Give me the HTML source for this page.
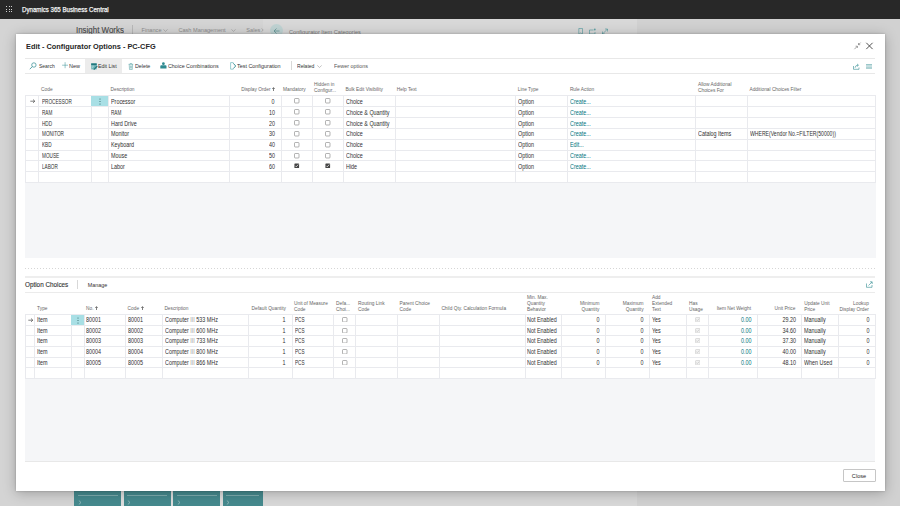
<!DOCTYPE html>
<html><head><meta charset="utf-8"><style>
html,body{margin:0;padding:0;width:900px;height:506px;overflow:hidden;}
body{position:relative;font-family:"Liberation Sans", sans-serif;}
.t{position:absolute;line-height:0;white-space:nowrap;}
.r{position:absolute;}
</style></head><body>
<div class="r" style="left:0.00px;top:0.00px;width:900.00px;height:506.00px;background:#d4d4d4;"></div>
<div class="r" style="left:263.00px;top:19.00px;width:374.00px;height:487.00px;background:#d8d8d8;"></div>
<div class="r" style="left:637.00px;top:19.00px;width:263.00px;height:487.00px;background:#d1d1d1;"></div>
<div class="r" style="left:0.00px;top:0.00px;width:900.00px;height:19.00px;background:#282828;"></div>
<div class="r" style="left:6.00px;top:6.00px;width:1.30px;height:1.30px;background:#d0d0d0;"></div>
<div class="r" style="left:6.00px;top:8.50px;width:1.30px;height:1.30px;background:#d0d0d0;"></div>
<div class="r" style="left:6.00px;top:11.00px;width:1.30px;height:1.30px;background:#d0d0d0;"></div>
<div class="r" style="left:8.50px;top:6.00px;width:1.30px;height:1.30px;background:#d0d0d0;"></div>
<div class="r" style="left:8.50px;top:8.50px;width:1.30px;height:1.30px;background:#d0d0d0;"></div>
<div class="r" style="left:8.50px;top:11.00px;width:1.30px;height:1.30px;background:#d0d0d0;"></div>
<div class="r" style="left:11.00px;top:6.00px;width:1.30px;height:1.30px;background:#d0d0d0;"></div>
<div class="r" style="left:11.00px;top:8.50px;width:1.30px;height:1.30px;background:#d0d0d0;"></div>
<div class="r" style="left:11.00px;top:11.00px;width:1.30px;height:1.30px;background:#d0d0d0;"></div>
<div class="t" style="left:22.00px;top:10px;font-size:6.8px;color:#f4f4f4;font-weight:400;transform:scaleX(0.9);transform-origin:left 0;-webkit-text-stroke:0.25px #f4f4f4;">Dynamics 365 Business Central</div>
<div class="t" style="left:75.50px;top:30px;font-size:8.6px;color:#4a4a4a;font-weight:400;transform:scaleX(0.922);transform-origin:left 0;-webkit-text-stroke:0.12px #4a4a4a;">Insight Works</div>
<div class="r" style="left:132.00px;top:25.00px;width:1.00px;height:9.00px;background:#b8b8b8;"></div>
<div class="t" style="left:141.60px;top:30px;font-size:5.6px;color:#8c8c8c;font-weight:400;">Finance</div>
<svg class="r" style="left:162.5px;top:28.8px" width="5" height="3" viewBox="0 0 5 3"><path d="M0.4 0.4 L2.5 2.4 L4.6 0.4" stroke="#8c8c8c" stroke-width="0.5" fill="none"/></svg>
<div class="t" style="left:178.40px;top:30px;font-size:5.6px;color:#8c8c8c;font-weight:400;">Cash Management</div>
<svg class="r" style="left:230.5px;top:28.8px" width="5" height="3" viewBox="0 0 5 3"><path d="M0.4 0.4 L2.5 2.4 L4.6 0.4" stroke="#8c8c8c" stroke-width="0.5" fill="none"/></svg>
<div class="t" style="left:246.30px;top:30px;font-size:5.6px;color:#8c8c8c;font-weight:400;">Sales</div>
<svg class="r" style="left:260.5px;top:28.3px" width="3" height="4" viewBox="0 0 3 4"><path d="M0.5 0.4 L2.2 2 L0.5 3.6" stroke="#8c8c8c" stroke-width="0.5" fill="none"/></svg>
<div class="r" style="left:269.6px;top:23.8px;width:13.3px;height:13.3px;border-radius:50%;background:#bfd3d3"></div>
<svg class="r" style="left:272.5px;top:27.5px" width="7" height="6" viewBox="0 0 7 6"><path d="M6.5 3 H1 M3.5 0.5 L1 3 L3.5 5.5" stroke="#5a8f90" stroke-width="0.7" fill="none"/></svg>
<div class="t" style="left:289.00px;top:32px;font-size:5.6px;color:#7a7a7a;font-weight:400;">Configurator Item Categories</div>
<svg class="r" style="left:578px;top:27.5px" width="32" height="7" viewBox="0 0 32 7"><path d="M0.8 0.5 H4.5 V6.5 L2.65 5 L0.8 6.5 Z" stroke="#2f8b91" stroke-width="0.7" fill="none" opacity="0.7"/><path d="M11.5 2 H15.5 M11.5 2 V6 H17 V4" stroke="#2f8b91" stroke-width="0.7" fill="none" opacity="0.7"/><circle cx="16.8" cy="1.5" r="0.9" fill="#2f8b91" opacity="0.7"/><path d="M24.5 6 L29.5 1 M27 1 H29.5 V3.5 M24.5 3.5 V6 H27" stroke="#2f8b91" stroke-width="0.7" fill="none" opacity="0.7"/></svg>
<div class="r" style="left:74.00px;top:491.00px;width:189.00px;height:15.00px;background:#dedede;"></div>
<div class="r" style="left:74.30px;top:491.00px;width:47.00px;height:15.00px;background:#468a8e;"></div>
<div class="r" style="left:78.00px;top:495.30px;width:39.60px;height:1.00px;background:#7eadaf;"></div>
<svg class="r" style="left:77.89999999999999px;top:500px" width="4" height="5" viewBox="0 0 4 5"><path d="M0.8 0.5 L3 2.5 L0.8 4.5" stroke="#a6c8c9" stroke-width="0.7" fill="none"/></svg>
<div class="r" style="left:123.70px;top:491.00px;width:47.10px;height:15.00px;background:#468a8e;"></div>
<div class="r" style="left:127.40px;top:495.30px;width:39.70px;height:1.00px;background:#7eadaf;"></div>
<svg class="r" style="left:127.3px;top:500px" width="4" height="5" viewBox="0 0 4 5"><path d="M0.8 0.5 L3 2.5 L0.8 4.5" stroke="#a6c8c9" stroke-width="0.7" fill="none"/></svg>
<div class="r" style="left:173.20px;top:491.00px;width:47.10px;height:15.00px;background:#468a8e;"></div>
<div class="r" style="left:176.90px;top:495.30px;width:39.70px;height:1.00px;background:#7eadaf;"></div>
<svg class="r" style="left:176.79999999999998px;top:500px" width="4" height="5" viewBox="0 0 4 5"><path d="M0.8 0.5 L3 2.5 L0.8 4.5" stroke="#a6c8c9" stroke-width="0.7" fill="none"/></svg>
<div class="r" style="left:222.60px;top:491.00px;width:40.40px;height:15.00px;background:#468a8e;"></div>
<div class="r" style="left:226.30px;top:495.30px;width:33.00px;height:1.00px;background:#7eadaf;"></div>
<svg class="r" style="left:226.2px;top:500px" width="4" height="5" viewBox="0 0 4 5"><path d="M0.8 0.5 L3 2.5 L0.8 4.5" stroke="#a6c8c9" stroke-width="0.7" fill="none"/></svg>
<div class="r" style="left:16px;top:34px;width:869px;height:457px;background:#ffffff;box-shadow:0 0 2px rgba(0,0,0,0.22),0 2px 12px rgba(0,0,0,0.26)"></div>
<div class="t" style="left:25.50px;top:47px;font-size:8.0px;color:#262626;font-weight:700;transform:scaleX(0.92);transform-origin:left 0;">Edit - Configurator Options - PC-CFG</div>
<svg class="r" style="left:852px;top:41px" width="24" height="10" viewBox="0 0 24 10"><path d="M2.4 8.2 L5.2 5.4 M3.6 5.2 H5.4 V7" stroke="#666" stroke-width="0.6" fill="none"/><path d="M8.6 1.6 L6.6 3.6 M6.5 2 V3.7 H8.2" stroke="#666" stroke-width="0.6" fill="none"/><path d="M14.3 1.8 L20.6 8.1 M20.6 1.8 L14.3 8.1" stroke="#333" stroke-width="0.85" fill="none"/></svg>
<div class="r" style="left:25.00px;top:58.00px;width:850.00px;height:1.00px;background:#e8e8e8;"></div>
<div class="r" style="left:25.00px;top:73.00px;width:850.00px;height:1.00px;background:#e8e8e8;"></div>
<div class="r" style="left:85.00px;top:59.00px;width:37.00px;height:14.00px;background:#ececec;"></div>
<svg class="r" style="left:28.5px;top:62px" width="8" height="8" viewBox="0 0 8 8"><circle cx="4.9" cy="3" r="2.2" stroke="#2f8b91" stroke-width="0.7" fill="none"/><path d="M3.3 4.6 L0.8 7.2" stroke="#2f8b91" stroke-width="0.8"/></svg>
<div class="t" style="left:38.70px;top:66px;font-size:6.0px;color:#333333;font-weight:400;transform:scaleX(0.826);transform-origin:left 0;">Search</div>
<svg class="r" style="left:61.5px;top:62px" width="6.5" height="6.5" viewBox="0 0 6.5 6.5"><path d="M3.1 0.2 V6.2 M0.1 3.2 H6.1" stroke="#2f8b91" stroke-width="0.5"/></svg>
<div class="t" style="left:69.00px;top:66px;font-size:6.0px;color:#333333;font-weight:400;transform:scaleX(0.915);transform-origin:left 0;">New</div>
<svg class="r" style="left:90.5px;top:62.5px" width="7" height="7" viewBox="0 0 7 7"><rect x="0.2" y="0.4" width="5.5" height="6" fill="#6fb3b7"/><rect x="0.2" y="0.4" width="5.5" height="1.7" fill="#20777d"/><path d="M2.8 6.6 L6.3 3" stroke="#1f767c" stroke-width="1.1"/><path d="M1 3.2 H3 M1 4.6 H2.2" stroke="#d8eeee" stroke-width="0.5"/></svg>
<div class="t" style="left:98.00px;top:66px;font-size:6.0px;color:#333333;font-weight:400;transform:scaleX(0.876);transform-origin:left 0;">Edit List</div>
<svg class="r" style="left:127.5px;top:62.5px" width="6" height="7" viewBox="0 0 6 7"><path d="M0.6 1.3 H5.2 M1.2 1.3 L1.5 6.5 H4.3 L4.6 1.3 M2.2 1.3 V0.5 H3.6 V1.3 M2.4 2.5 V5.5 M3.4 2.5 V5.5" stroke="#2f8b91" stroke-width="0.55" fill="none" opacity="0.8"/></svg>
<div class="t" style="left:134.70px;top:66px;font-size:6.0px;color:#333333;font-weight:400;transform:scaleX(0.882);transform-origin:left 0;">Delete</div>
<svg class="r" style="left:160px;top:62.3px" width="7" height="7" viewBox="0 0 7 7"><circle cx="3.4" cy="1.7" r="1.4" fill="#2f8b91"/><path d="M0.3 6.5 V4 Q0.3 3.3 1.3 3.3 H5.5 Q6.5 3.3 6.5 4 V6.5 Z" fill="#2f8b91"/></svg>
<div class="t" style="left:168.30px;top:66px;font-size:6.0px;color:#333333;font-weight:400;transform:scaleX(0.889);transform-origin:left 0;">Choice Combinations</div>
<svg class="r" style="left:229.8px;top:62px" width="7" height="8" viewBox="0 0 7 8"><path d="M3.4 0.6 H0.6 V7.2 H3.4" stroke="#7fc0c4" stroke-width="0.8" fill="none"/><path d="M3.3 1.3 L5.7 4 L3.3 6.6" stroke="#2a8a90" stroke-width="0.9" fill="none"/></svg>
<div class="t" style="left:237.40px;top:66px;font-size:6.0px;color:#333333;font-weight:400;transform:scaleX(0.902);transform-origin:left 0;">Test Configuration</div>
<div class="r" style="left:291.00px;top:61.00px;width:1.00px;height:9.00px;background:#d8d8d8;"></div>
<div class="t" style="left:296.50px;top:66px;font-size:6.0px;color:#333333;font-weight:400;transform:scaleX(0.841);transform-origin:left 0;">Related</div>
<svg class="r" style="left:316.5px;top:64.5px" width="5" height="3" viewBox="0 0 5 3"><path d="M0.3 0.4 L2.5 2.5 L4.7 0.4" stroke="#888" stroke-width="0.5" fill="none"/></svg>
<div class="t" style="left:333.80px;top:66px;font-size:6.0px;color:#555555;font-weight:400;transform:scaleX(0.902);transform-origin:left 0;">Fewer options</div>
<svg class="r" style="left:852.5px;top:62.5px" width="7" height="7" viewBox="0 0 7 7"><path d="M0.5 3 V6.3 H6 V4.5" stroke="#2f8b91" stroke-width="0.6" fill="none"/><path d="M2 4.8 Q2.3 2.2 5 2.2 M4 0.9 L5.5 2.2 L4 3.5" stroke="#2f8b91" stroke-width="0.6" fill="none"/></svg>
<svg class="r" style="left:866px;top:63.5px" width="6" height="5.5" viewBox="0 0 6 5.5"><path d="M0 0.5 H6 M0 1.9 H6 M0 3.3 H6 M0 4.7 H6" stroke="#2f8b91" stroke-width="0.6" opacity="0.8"/></svg>
<div class="t" style="left:41.10px;top:90px;font-size:4.8px;color:#666666;font-weight:400;">Code</div>
<div class="t" style="left:110.50px;top:90px;font-size:4.8px;color:#666666;font-weight:400;">Description</div>
<div class="t" style="right:629.50px;top:90px;font-size:4.8px;color:#666666;font-weight:400;text-align:right;">Display Order</div>
<svg class="r" style="left:272px;top:86.5px" width="3" height="4.5" viewBox="0 0 3 4.5"><path d="M1.5 4.3 V0.8 M0.3 2 L1.5 0.6 L2.7 2" stroke="#555" stroke-width="0.75" fill="none"/></svg>
<div class="t" style="left:283.00px;top:90px;font-size:4.8px;color:#666666;font-weight:400;">Mandatory</div>
<div class="t" style="left:314.10px;top:85px;font-size:4.8px;color:#666666;font-weight:400;">Hidden in</div>
<div class="t" style="left:314.10px;top:91px;font-size:4.8px;color:#666666;font-weight:400;">Configur...</div>
<div class="t" style="left:345.40px;top:90px;font-size:4.8px;color:#666666;font-weight:400;">Bulk Edit Visibility</div>
<div class="t" style="left:396.80px;top:90px;font-size:4.8px;color:#666666;font-weight:400;">Help Text</div>
<div class="t" style="left:517.80px;top:90px;font-size:4.8px;color:#666666;font-weight:400;">Line Type</div>
<div class="t" style="left:569.90px;top:90px;font-size:4.8px;color:#666666;font-weight:400;">Rule Action</div>
<div class="t" style="left:698.00px;top:85px;font-size:4.8px;color:#666666;font-weight:400;">Allow Additional</div>
<div class="t" style="left:698.00px;top:91px;font-size:4.8px;color:#666666;font-weight:400;">Choices For</div>
<div class="t" style="left:749.50px;top:90px;font-size:4.8px;color:#666666;font-weight:400;">Additional Choices Filter</div>
<div class="r" style="left:25.00px;top:182.00px;width:850.50px;height:76.00px;background:#f5f6f8;"></div>
<div class="r" style="left:25.00px;top:95.00px;width:850.50px;height:1.00px;background:#e9eaee;"></div>
<div class="r" style="left:25.00px;top:106.00px;width:850.50px;height:1.00px;background:#e9eaee;"></div>
<div class="r" style="left:25.00px;top:117.00px;width:850.50px;height:1.00px;background:#e9eaee;"></div>
<div class="r" style="left:25.00px;top:128.00px;width:850.50px;height:1.00px;background:#e9eaee;"></div>
<div class="r" style="left:25.00px;top:139.00px;width:850.50px;height:1.00px;background:#e9eaee;"></div>
<div class="r" style="left:25.00px;top:150.00px;width:850.50px;height:1.00px;background:#e9eaee;"></div>
<div class="r" style="left:25.00px;top:160.00px;width:850.50px;height:1.00px;background:#e9eaee;"></div>
<div class="r" style="left:25.00px;top:171.00px;width:850.50px;height:1.00px;background:#e9eaee;"></div>
<div class="r" style="left:25.00px;top:182.00px;width:850.50px;height:1.00px;background:#e9eaee;"></div>
<div class="r" style="left:25.00px;top:95.00px;width:1.00px;height:88.00px;background:#e9eaee;"></div>
<div class="r" style="left:38.00px;top:95.00px;width:1.00px;height:88.00px;background:#e9eaee;"></div>
<div class="r" style="left:91.00px;top:95.00px;width:1.00px;height:88.00px;background:#e9eaee;"></div>
<div class="r" style="left:108.00px;top:95.00px;width:1.00px;height:88.00px;background:#e9eaee;"></div>
<div class="r" style="left:229.00px;top:95.00px;width:1.00px;height:88.00px;background:#e9eaee;"></div>
<div class="r" style="left:281.00px;top:95.00px;width:1.00px;height:88.00px;background:#e9eaee;"></div>
<div class="r" style="left:312.00px;top:95.00px;width:1.00px;height:88.00px;background:#e9eaee;"></div>
<div class="r" style="left:343.00px;top:95.00px;width:1.00px;height:88.00px;background:#e9eaee;"></div>
<div class="r" style="left:395.00px;top:95.00px;width:1.00px;height:88.00px;background:#e9eaee;"></div>
<div class="r" style="left:515.00px;top:95.00px;width:1.00px;height:88.00px;background:#e9eaee;"></div>
<div class="r" style="left:567.00px;top:95.00px;width:1.00px;height:88.00px;background:#e9eaee;"></div>
<div class="r" style="left:695.00px;top:95.00px;width:1.00px;height:88.00px;background:#e9eaee;"></div>
<div class="r" style="left:747.00px;top:95.00px;width:1.00px;height:88.00px;background:#e9eaee;"></div>
<div class="r" style="left:875.00px;top:95.00px;width:1.00px;height:88.00px;background:#e9eaee;"></div>
<div class="r" style="left:91.00px;top:96.00px;width:17.00px;height:10.00px;background:#a8dfe5;"></div>
<svg class="r" style="left:98.8px;top:97.5px" width="2" height="7" viewBox="0 0 2 7"><circle cx="1" cy="1" r="0.55" fill="#2d5f64"/><circle cx="1" cy="3.5" r="0.55" fill="#2d5f64"/><circle cx="1" cy="6" r="0.55" fill="#2d5f64"/></svg>
<svg class="r" style="left:29.5px;top:99.2px" width="5.5" height="4.5" viewBox="0 0 5.5 4.5"><path d="M0.3 2.2 H4.8 M3 0.5 L4.8 2.2 L3 3.9" stroke="#4a4a4a" stroke-width="0.7" fill="none"/></svg>
<div class="t" style="left:41.50px;top:102px;font-size:6.4px;color:#303030;font-weight:400;transform:scaleX(0.73);transform-origin:left 0;">PROCESSOR</div>
<div class="t" style="left:110.90px;top:102px;font-size:6.4px;color:#303030;font-weight:400;transform:scaleX(0.845);transform-origin:left 0;">Processor</div>
<div class="t" style="right:625.00px;top:102px;font-size:6.4px;color:#303030;font-weight:400;text-align:right;transform:scaleX(0.845);transform-origin:right 0;">0</div>
<svg class="r" style="left:294.2px;top:98.2px" width="5.5" height="5.5" viewBox="0 0 55 55"><rect x="5" y="5" width="45" height="45" rx="8" fill="#fff" stroke="#666" stroke-width="5"/></svg>
<svg class="r" style="left:325px;top:98.2px" width="5.5" height="5.5" viewBox="0 0 55 55"><rect x="5" y="5" width="45" height="45" rx="8" fill="#fff" stroke="#666" stroke-width="5"/></svg>
<div class="t" style="left:345.70px;top:102px;font-size:6.4px;color:#303030;font-weight:400;transform:scaleX(0.845);transform-origin:left 0;">Choice</div>
<div class="t" style="left:517.80px;top:102px;font-size:6.4px;color:#303030;font-weight:400;transform:scaleX(0.845);transform-origin:left 0;">Option</div>
<div class="t" style="left:570.00px;top:102px;font-size:6.4px;color:#00747c;font-weight:400;transform:scaleX(0.845);transform-origin:left 0;">Create...</div>
<div class="t" style="left:41.50px;top:113px;font-size:6.4px;color:#303030;font-weight:400;transform:scaleX(0.73);transform-origin:left 0;">RAM</div>
<div class="t" style="left:110.90px;top:113px;font-size:6.4px;color:#303030;font-weight:400;transform:scaleX(0.73);transform-origin:left 0;">RAM</div>
<div class="t" style="right:625.00px;top:113px;font-size:6.4px;color:#303030;font-weight:400;text-align:right;transform:scaleX(0.845);transform-origin:right 0;">10</div>
<svg class="r" style="left:294.2px;top:109.2px" width="5.5" height="5.5" viewBox="0 0 55 55"><rect x="5" y="5" width="45" height="45" rx="8" fill="#fff" stroke="#666" stroke-width="5"/></svg>
<svg class="r" style="left:325px;top:109.2px" width="5.5" height="5.5" viewBox="0 0 55 55"><rect x="5" y="5" width="45" height="45" rx="8" fill="#fff" stroke="#666" stroke-width="5"/></svg>
<div class="t" style="left:345.70px;top:113px;font-size:6.4px;color:#303030;font-weight:400;transform:scaleX(0.845);transform-origin:left 0;">Choice &amp; Quantity</div>
<div class="t" style="left:517.80px;top:113px;font-size:6.4px;color:#303030;font-weight:400;transform:scaleX(0.845);transform-origin:left 0;">Option</div>
<div class="t" style="left:570.00px;top:113px;font-size:6.4px;color:#00747c;font-weight:400;transform:scaleX(0.845);transform-origin:left 0;">Create...</div>
<div class="t" style="left:41.50px;top:124px;font-size:6.4px;color:#303030;font-weight:400;transform:scaleX(0.73);transform-origin:left 0;">HDD</div>
<div class="t" style="left:110.90px;top:124px;font-size:6.4px;color:#303030;font-weight:400;transform:scaleX(0.845);transform-origin:left 0;">Hard Drive</div>
<div class="t" style="right:625.00px;top:124px;font-size:6.4px;color:#303030;font-weight:400;text-align:right;transform:scaleX(0.845);transform-origin:right 0;">20</div>
<svg class="r" style="left:294.2px;top:120.2px" width="5.5" height="5.5" viewBox="0 0 55 55"><rect x="5" y="5" width="45" height="45" rx="8" fill="#fff" stroke="#666" stroke-width="5"/></svg>
<svg class="r" style="left:325px;top:120.2px" width="5.5" height="5.5" viewBox="0 0 55 55"><rect x="5" y="5" width="45" height="45" rx="8" fill="#fff" stroke="#666" stroke-width="5"/></svg>
<div class="t" style="left:345.70px;top:124px;font-size:6.4px;color:#303030;font-weight:400;transform:scaleX(0.845);transform-origin:left 0;">Choice &amp; Quantity</div>
<div class="t" style="left:517.80px;top:124px;font-size:6.4px;color:#303030;font-weight:400;transform:scaleX(0.845);transform-origin:left 0;">Option</div>
<div class="t" style="left:570.00px;top:124px;font-size:6.4px;color:#00747c;font-weight:400;transform:scaleX(0.845);transform-origin:left 0;">Create...</div>
<div class="t" style="left:41.50px;top:134px;font-size:6.4px;color:#303030;font-weight:400;transform:scaleX(0.73);transform-origin:left 0;">MONITOR</div>
<div class="t" style="left:110.90px;top:134px;font-size:6.4px;color:#303030;font-weight:400;transform:scaleX(0.845);transform-origin:left 0;">Monitor</div>
<div class="t" style="right:625.00px;top:134px;font-size:6.4px;color:#303030;font-weight:400;text-align:right;transform:scaleX(0.845);transform-origin:right 0;">30</div>
<svg class="r" style="left:294.2px;top:131.2px" width="5.5" height="5.5" viewBox="0 0 55 55"><rect x="5" y="5" width="45" height="45" rx="8" fill="#fff" stroke="#666" stroke-width="5"/></svg>
<svg class="r" style="left:325px;top:131.2px" width="5.5" height="5.5" viewBox="0 0 55 55"><rect x="5" y="5" width="45" height="45" rx="8" fill="#fff" stroke="#666" stroke-width="5"/></svg>
<div class="t" style="left:345.70px;top:134px;font-size:6.4px;color:#303030;font-weight:400;transform:scaleX(0.845);transform-origin:left 0;">Choice</div>
<div class="t" style="left:517.80px;top:134px;font-size:6.4px;color:#303030;font-weight:400;transform:scaleX(0.845);transform-origin:left 0;">Option</div>
<div class="t" style="left:570.00px;top:134px;font-size:6.4px;color:#00747c;font-weight:400;transform:scaleX(0.845);transform-origin:left 0;">Create...</div>
<div class="t" style="left:698.00px;top:134px;font-size:6.4px;color:#303030;font-weight:400;transform:scaleX(0.845);transform-origin:left 0;">Catalog Items</div>
<div class="t" style="left:750.00px;top:134px;font-size:6.4px;color:#303030;font-weight:400;transform:scaleX(0.8);transform-origin:left 0;">WHERE(Vendor No.=FILTER(50000))</div>
<div class="t" style="left:41.50px;top:145px;font-size:6.4px;color:#303030;font-weight:400;transform:scaleX(0.73);transform-origin:left 0;">KBD</div>
<div class="t" style="left:110.90px;top:145px;font-size:6.4px;color:#303030;font-weight:400;transform:scaleX(0.845);transform-origin:left 0;">Keyboard</div>
<div class="t" style="right:625.00px;top:145px;font-size:6.4px;color:#303030;font-weight:400;text-align:right;transform:scaleX(0.845);transform-origin:right 0;">40</div>
<svg class="r" style="left:294.2px;top:142.2px" width="5.5" height="5.5" viewBox="0 0 55 55"><rect x="5" y="5" width="45" height="45" rx="8" fill="#fff" stroke="#666" stroke-width="5"/></svg>
<svg class="r" style="left:325px;top:142.2px" width="5.5" height="5.5" viewBox="0 0 55 55"><rect x="5" y="5" width="45" height="45" rx="8" fill="#fff" stroke="#666" stroke-width="5"/></svg>
<div class="t" style="left:345.70px;top:145px;font-size:6.4px;color:#303030;font-weight:400;transform:scaleX(0.845);transform-origin:left 0;">Choice</div>
<div class="t" style="left:517.80px;top:145px;font-size:6.4px;color:#303030;font-weight:400;transform:scaleX(0.845);transform-origin:left 0;">Option</div>
<div class="t" style="left:570.00px;top:145px;font-size:6.4px;color:#00747c;font-weight:400;transform:scaleX(0.845);transform-origin:left 0;">Edit...</div>
<div class="t" style="left:41.50px;top:156px;font-size:6.4px;color:#303030;font-weight:400;transform:scaleX(0.73);transform-origin:left 0;">MOUSE</div>
<div class="t" style="left:110.90px;top:156px;font-size:6.4px;color:#303030;font-weight:400;transform:scaleX(0.845);transform-origin:left 0;">Mouse</div>
<div class="t" style="right:625.00px;top:156px;font-size:6.4px;color:#303030;font-weight:400;text-align:right;transform:scaleX(0.845);transform-origin:right 0;">50</div>
<svg class="r" style="left:294.2px;top:153.2px" width="5.5" height="5.5" viewBox="0 0 55 55"><rect x="5" y="5" width="45" height="45" rx="8" fill="#fff" stroke="#666" stroke-width="5"/></svg>
<svg class="r" style="left:325px;top:153.2px" width="5.5" height="5.5" viewBox="0 0 55 55"><rect x="5" y="5" width="45" height="45" rx="8" fill="#fff" stroke="#666" stroke-width="5"/></svg>
<div class="t" style="left:345.70px;top:156px;font-size:6.4px;color:#303030;font-weight:400;transform:scaleX(0.845);transform-origin:left 0;">Choice</div>
<div class="t" style="left:517.80px;top:156px;font-size:6.4px;color:#303030;font-weight:400;transform:scaleX(0.845);transform-origin:left 0;">Option</div>
<div class="t" style="left:570.00px;top:156px;font-size:6.4px;color:#00747c;font-weight:400;transform:scaleX(0.845);transform-origin:left 0;">Create...</div>
<div class="t" style="left:41.50px;top:167px;font-size:6.4px;color:#303030;font-weight:400;transform:scaleX(0.73);transform-origin:left 0;">LABOR</div>
<div class="t" style="left:110.90px;top:167px;font-size:6.4px;color:#303030;font-weight:400;transform:scaleX(0.845);transform-origin:left 0;">Labor</div>
<div class="t" style="right:625.00px;top:167px;font-size:6.4px;color:#303030;font-weight:400;text-align:right;transform:scaleX(0.845);transform-origin:right 0;">60</div>
<svg class="r" style="left:294.2px;top:163.2px" width="5.5" height="5.5" viewBox="0 0 55 55"><rect x="4" y="4" width="47" height="47" rx="7" fill="#444"/><path d="M13 28 L23 38 L42 16" stroke="#fff" stroke-width="7" fill="none"/></svg>
<svg class="r" style="left:325px;top:163.2px" width="5.5" height="5.5" viewBox="0 0 55 55"><rect x="4" y="4" width="47" height="47" rx="7" fill="#444"/><path d="M13 28 L23 38 L42 16" stroke="#fff" stroke-width="7" fill="none"/></svg>
<div class="t" style="left:345.70px;top:167px;font-size:6.4px;color:#303030;font-weight:400;transform:scaleX(0.845);transform-origin:left 0;">Hide</div>
<div class="t" style="left:517.80px;top:167px;font-size:6.4px;color:#303030;font-weight:400;transform:scaleX(0.845);transform-origin:left 0;">Option</div>
<div class="t" style="left:570.00px;top:167px;font-size:6.4px;color:#00747c;font-weight:400;transform:scaleX(0.845);transform-origin:left 0;">Create...</div>
<div class="r" style="left:25.00px;top:268.00px;width:850.00px;height:1.00px;background:repeating-linear-gradient(90deg,#d6d6d6 0 1px,transparent 1px 3px);"></div>
<div class="r" style="left:25.00px;top:276.00px;width:850.00px;height:2.00px;background:#eeeeee;"></div>
<div class="t" style="left:25.00px;top:285px;font-size:6.6px;color:#333333;font-weight:400;transform:scaleX(0.96);transform-origin:left 0;-webkit-text-stroke:0.12px #333;">Option Choices</div>
<div class="r" style="left:77.30px;top:280.00px;width:1.00px;height:8.50px;background:#d8d8d8;"></div>
<div class="t" style="left:87.80px;top:285px;font-size:5.4px;color:#333333;font-weight:400;">Manage</div>
<svg class="r" style="left:866px;top:281.3px" width="7" height="7" viewBox="0 0 7 7"><path d="M0.5 2.5 V6.3 H6 V4" stroke="#2f8b91" stroke-width="0.6" fill="none"/><path d="M2.5 4.5 L6 1 M4 0.8 H6.2 V3" stroke="#2f8b91" stroke-width="0.6" fill="none"/></svg>
<div class="r" style="left:25.00px;top:292.00px;width:850.00px;height:1.00px;background:#ebebeb;"></div>
<div class="t" style="left:37.10px;top:309px;font-size:4.8px;color:#666666;font-weight:400;">Type</div>
<div class="t" style="left:86.10px;top:309px;font-size:4.8px;color:#666666;font-weight:400;">No.</div>
<svg class="r" style="left:94.5px;top:305.5px" width="3" height="4.5" viewBox="0 0 3 4.5"><path d="M1.5 4.3 V0.8 M0.3 2 L1.5 0.6 L2.7 2" stroke="#555" stroke-width="0.75" fill="none"/></svg>
<div class="t" style="left:127.60px;top:309px;font-size:4.8px;color:#666666;font-weight:400;">Code</div>
<svg class="r" style="left:140.8px;top:305.5px" width="3" height="4.5" viewBox="0 0 3 4.5"><path d="M1.5 4.3 V0.8 M0.3 2 L1.5 0.6 L2.7 2" stroke="#555" stroke-width="0.75" fill="none"/></svg>
<div class="t" style="left:164.40px;top:309px;font-size:4.8px;color:#666666;font-weight:400;">Description</div>
<div class="t" style="right:614.00px;top:309px;font-size:4.8px;color:#666666;font-weight:400;text-align:right;">Default Quantity</div>
<div class="t" style="left:294.00px;top:304px;font-size:4.8px;color:#666666;font-weight:400;">Unit of Measure</div>
<div class="t" style="left:294.00px;top:310px;font-size:4.8px;color:#666666;font-weight:400;">Code</div>
<div class="t" style="left:336.00px;top:304px;font-size:4.8px;color:#666666;font-weight:400;">Defa...</div>
<div class="t" style="left:336.00px;top:310px;font-size:4.8px;color:#666666;font-weight:400;">Choi...</div>
<div class="t" style="left:358.00px;top:304px;font-size:4.8px;color:#666666;font-weight:400;">Routing Link</div>
<div class="t" style="left:358.00px;top:310px;font-size:4.8px;color:#666666;font-weight:400;">Code</div>
<div class="t" style="left:399.60px;top:304px;font-size:4.8px;color:#666666;font-weight:400;">Parent Choice</div>
<div class="t" style="left:399.60px;top:310px;font-size:4.8px;color:#666666;font-weight:400;">Code</div>
<div class="t" style="left:441.40px;top:309px;font-size:4.8px;color:#666666;font-weight:400;">Child Qty. Calculation Formula</div>
<div class="t" style="left:527.00px;top:298px;font-size:4.8px;color:#666666;font-weight:400;">Min. Max.</div>
<div class="t" style="left:527.00px;top:304px;font-size:4.8px;color:#666666;font-weight:400;">Quantity</div>
<div class="t" style="left:527.00px;top:310px;font-size:4.8px;color:#666666;font-weight:400;">Behavior</div>
<div class="t" style="right:300.60px;top:304px;font-size:4.8px;color:#666666;font-weight:400;text-align:right;">Minimum</div>
<div class="t" style="right:300.60px;top:310px;font-size:4.8px;color:#666666;font-weight:400;text-align:right;">Quantity</div>
<div class="t" style="right:256.40px;top:304px;font-size:4.8px;color:#666666;font-weight:400;text-align:right;">Maximum</div>
<div class="t" style="right:256.40px;top:310px;font-size:4.8px;color:#666666;font-weight:400;text-align:right;">Quantity</div>
<div class="t" style="left:652.00px;top:298px;font-size:4.8px;color:#666666;font-weight:400;">Add</div>
<div class="t" style="left:652.00px;top:304px;font-size:4.8px;color:#666666;font-weight:400;">Extended</div>
<div class="t" style="left:652.00px;top:310px;font-size:4.8px;color:#666666;font-weight:400;">Text</div>
<div class="t" style="left:689.00px;top:304px;font-size:4.8px;color:#666666;font-weight:400;">Has</div>
<div class="t" style="left:689.00px;top:310px;font-size:4.8px;color:#666666;font-weight:400;">Usage</div>
<div class="t" style="right:149.00px;top:309px;font-size:4.8px;color:#666666;font-weight:400;text-align:right;">Item Net Weight</div>
<div class="t" style="right:104.70px;top:309px;font-size:4.8px;color:#666666;font-weight:400;text-align:right;">Unit Price</div>
<div class="t" style="left:804.20px;top:304px;font-size:4.8px;color:#666666;font-weight:400;">Update Unit</div>
<div class="t" style="left:804.20px;top:310px;font-size:4.8px;color:#666666;font-weight:400;">Price</div>
<div class="t" style="right:31.20px;top:304px;font-size:4.8px;color:#666666;font-weight:400;text-align:right;">Lookup</div>
<div class="t" style="right:31.20px;top:310px;font-size:4.8px;color:#666666;font-weight:400;text-align:right;">Display Order</div>
<div class="r" style="left:25.00px;top:378.00px;width:850.00px;height:83.00px;background:#f5f6f8;"></div>
<div class="r" style="left:25.00px;top:461.00px;width:850.00px;height:1.00px;background:#e8e8e8;"></div>
<div class="r" style="left:25.00px;top:314.00px;width:850.00px;height:1.00px;background:#e9eaee;"></div>
<div class="r" style="left:25.00px;top:325.00px;width:850.00px;height:1.00px;background:#e9eaee;"></div>
<div class="r" style="left:25.00px;top:335.00px;width:850.00px;height:1.00px;background:#e9eaee;"></div>
<div class="r" style="left:25.00px;top:346.00px;width:850.00px;height:1.00px;background:#e9eaee;"></div>
<div class="r" style="left:25.00px;top:357.00px;width:850.00px;height:1.00px;background:#e9eaee;"></div>
<div class="r" style="left:25.00px;top:367.00px;width:850.00px;height:1.00px;background:#e9eaee;"></div>
<div class="r" style="left:25.00px;top:378.00px;width:850.00px;height:1.00px;background:#e9eaee;"></div>
<div class="r" style="left:25.00px;top:314.00px;width:1.00px;height:65.00px;background:#e9eaee;"></div>
<div class="r" style="left:34.00px;top:314.00px;width:1.00px;height:65.00px;background:#e9eaee;"></div>
<div class="r" style="left:71.00px;top:314.00px;width:1.00px;height:65.00px;background:#e9eaee;"></div>
<div class="r" style="left:84.00px;top:314.00px;width:1.00px;height:65.00px;background:#e9eaee;"></div>
<div class="r" style="left:125.00px;top:314.00px;width:1.00px;height:65.00px;background:#e9eaee;"></div>
<div class="r" style="left:162.00px;top:314.00px;width:1.00px;height:65.00px;background:#e9eaee;"></div>
<div class="r" style="left:248.00px;top:314.00px;width:1.00px;height:65.00px;background:#e9eaee;"></div>
<div class="r" style="left:292.00px;top:314.00px;width:1.00px;height:65.00px;background:#e9eaee;"></div>
<div class="r" style="left:333.00px;top:314.00px;width:1.00px;height:65.00px;background:#e9eaee;"></div>
<div class="r" style="left:355.00px;top:314.00px;width:1.00px;height:65.00px;background:#e9eaee;"></div>
<div class="r" style="left:397.00px;top:314.00px;width:1.00px;height:65.00px;background:#e9eaee;"></div>
<div class="r" style="left:439.00px;top:314.00px;width:1.00px;height:65.00px;background:#e9eaee;"></div>
<div class="r" style="left:525.00px;top:314.00px;width:1.00px;height:65.00px;background:#e9eaee;"></div>
<div class="r" style="left:561.00px;top:314.00px;width:1.00px;height:65.00px;background:#e9eaee;"></div>
<div class="r" style="left:605.00px;top:314.00px;width:1.00px;height:65.00px;background:#e9eaee;"></div>
<div class="r" style="left:649.00px;top:314.00px;width:1.00px;height:65.00px;background:#e9eaee;"></div>
<div class="r" style="left:686.00px;top:314.00px;width:1.00px;height:65.00px;background:#e9eaee;"></div>
<div class="r" style="left:708.00px;top:314.00px;width:1.00px;height:65.00px;background:#e9eaee;"></div>
<div class="r" style="left:757.00px;top:314.00px;width:1.00px;height:65.00px;background:#e9eaee;"></div>
<div class="r" style="left:801.00px;top:314.00px;width:1.00px;height:65.00px;background:#e9eaee;"></div>
<div class="r" style="left:838.00px;top:314.00px;width:1.00px;height:65.00px;background:#e9eaee;"></div>
<div class="r" style="left:875.00px;top:314.00px;width:1.00px;height:65.00px;background:#e9eaee;"></div>
<div class="r" style="left:71.00px;top:315.00px;width:13.00px;height:10.00px;background:#a8dfe5;"></div>
<svg class="r" style="left:77px;top:316.5px" width="2" height="7" viewBox="0 0 2 7"><circle cx="1" cy="1" r="0.55" fill="#2d5f64"/><circle cx="1" cy="3.5" r="0.55" fill="#2d5f64"/><circle cx="1" cy="6" r="0.55" fill="#2d5f64"/></svg>
<svg class="r" style="left:28px;top:317.5px" width="5.5" height="4.5" viewBox="0 0 5.5 4.5"><path d="M0.3 2.2 H4.8 M3 0.5 L4.8 2.2 L3 3.9" stroke="#4a4a4a" stroke-width="0.7" fill="none"/></svg>
<div class="t" style="left:37.10px;top:320px;font-size:6.4px;color:#303030;font-weight:400;transform:scaleX(0.845);transform-origin:left 0;">Item</div>
<div class="t" style="left:86.10px;top:320px;font-size:6.4px;color:#303030;font-weight:400;transform:scaleX(0.845);transform-origin:left 0;">80001</div>
<div class="t" style="left:127.60px;top:320px;font-size:6.4px;color:#303030;font-weight:400;transform:scaleX(0.845);transform-origin:left 0;">80001</div>
<div class="t" style="left:165.00px;top:320px;font-size:6.4px;color:#303030;font-weight:400;transform:scaleX(0.845);transform-origin:left 0;">Computer <span style="color:#9a9a9a">III</span> 533 MHz</div>
<div class="t" style="right:614.00px;top:320px;font-size:6.4px;color:#303030;font-weight:400;text-align:right;transform:scaleX(0.845);transform-origin:right 0;">1</div>
<div class="t" style="left:294.50px;top:320px;font-size:6.4px;color:#303030;font-weight:400;transform:scaleX(0.73);transform-origin:left 0;">PCS</div>
<svg class="r" style="left:342.3px;top:316.8px" width="5.5" height="5.5" viewBox="0 0 55 55"><rect x="5" y="5" width="45" height="45" rx="8" fill="#fff" stroke="#666" stroke-width="5"/></svg>
<div class="t" style="left:527.40px;top:320px;font-size:6.4px;color:#303030;font-weight:400;transform:scaleX(0.845);transform-origin:left 0;">Not Enabled</div>
<div class="t" style="right:300.60px;top:320px;font-size:6.4px;color:#303030;font-weight:400;text-align:right;transform:scaleX(0.845);transform-origin:right 0;">0</div>
<div class="t" style="right:256.40px;top:320px;font-size:6.4px;color:#303030;font-weight:400;text-align:right;transform:scaleX(0.845);transform-origin:right 0;">0</div>
<div class="t" style="left:652.00px;top:320px;font-size:6.4px;color:#303030;font-weight:400;transform:scaleX(0.845);transform-origin:left 0;">Yes</div>
<svg class="r" style="left:694.8px;top:316.5px" width="5.5" height="5.5" viewBox="0 0 55 55"><rect x="5" y="5" width="45" height="45" rx="7" fill="#f2f2f2" stroke="#c2c2c2" stroke-width="5"/><path d="M14 28 L23 37 L41 17" stroke="#b8b8b8" stroke-width="6" fill="none"/></svg>
<div class="t" style="right:149.00px;top:320px;font-size:6.4px;color:#00747c;font-weight:400;text-align:right;transform:scaleX(0.845);transform-origin:right 0;">0.00</div>
<div class="t" style="right:104.50px;top:320px;font-size:6.4px;color:#303030;font-weight:400;text-align:right;transform:scaleX(0.845);transform-origin:right 0;">29.20</div>
<div class="t" style="left:804.20px;top:320px;font-size:6.4px;color:#303030;font-weight:400;transform:scaleX(0.845);transform-origin:left 0;">Manually</div>
<div class="t" style="right:30.50px;top:320px;font-size:6.4px;color:#303030;font-weight:400;text-align:right;transform:scaleX(0.845);transform-origin:right 0;">0</div>
<div class="t" style="left:37.10px;top:331px;font-size:6.4px;color:#303030;font-weight:400;transform:scaleX(0.845);transform-origin:left 0;">Item</div>
<div class="t" style="left:86.10px;top:331px;font-size:6.4px;color:#303030;font-weight:400;transform:scaleX(0.845);transform-origin:left 0;">80002</div>
<div class="t" style="left:127.60px;top:331px;font-size:6.4px;color:#303030;font-weight:400;transform:scaleX(0.845);transform-origin:left 0;">80002</div>
<div class="t" style="left:165.00px;top:331px;font-size:6.4px;color:#303030;font-weight:400;transform:scaleX(0.845);transform-origin:left 0;">Computer <span style="color:#9a9a9a">III</span> 600 MHz</div>
<div class="t" style="right:614.00px;top:331px;font-size:6.4px;color:#303030;font-weight:400;text-align:right;transform:scaleX(0.845);transform-origin:right 0;">1</div>
<div class="t" style="left:294.50px;top:331px;font-size:6.4px;color:#303030;font-weight:400;transform:scaleX(0.73);transform-origin:left 0;">PCS</div>
<svg class="r" style="left:342.3px;top:327.8px" width="5.5" height="5.5" viewBox="0 0 55 55"><rect x="5" y="5" width="45" height="45" rx="8" fill="#fff" stroke="#666" stroke-width="5"/></svg>
<div class="t" style="left:527.40px;top:331px;font-size:6.4px;color:#303030;font-weight:400;transform:scaleX(0.845);transform-origin:left 0;">Not Enabled</div>
<div class="t" style="right:300.60px;top:331px;font-size:6.4px;color:#303030;font-weight:400;text-align:right;transform:scaleX(0.845);transform-origin:right 0;">0</div>
<div class="t" style="right:256.40px;top:331px;font-size:6.4px;color:#303030;font-weight:400;text-align:right;transform:scaleX(0.845);transform-origin:right 0;">0</div>
<div class="t" style="left:652.00px;top:331px;font-size:6.4px;color:#303030;font-weight:400;transform:scaleX(0.845);transform-origin:left 0;">Yes</div>
<svg class="r" style="left:694.8px;top:327.5px" width="5.5" height="5.5" viewBox="0 0 55 55"><rect x="5" y="5" width="45" height="45" rx="7" fill="#f2f2f2" stroke="#c2c2c2" stroke-width="5"/><path d="M14 28 L23 37 L41 17" stroke="#b8b8b8" stroke-width="6" fill="none"/></svg>
<div class="t" style="right:149.00px;top:331px;font-size:6.4px;color:#00747c;font-weight:400;text-align:right;transform:scaleX(0.845);transform-origin:right 0;">0.00</div>
<div class="t" style="right:104.50px;top:331px;font-size:6.4px;color:#303030;font-weight:400;text-align:right;transform:scaleX(0.845);transform-origin:right 0;">34.60</div>
<div class="t" style="left:804.20px;top:331px;font-size:6.4px;color:#303030;font-weight:400;transform:scaleX(0.845);transform-origin:left 0;">Manually</div>
<div class="t" style="right:30.50px;top:331px;font-size:6.4px;color:#303030;font-weight:400;text-align:right;transform:scaleX(0.845);transform-origin:right 0;">0</div>
<div class="t" style="left:37.10px;top:341px;font-size:6.4px;color:#303030;font-weight:400;transform:scaleX(0.845);transform-origin:left 0;">Item</div>
<div class="t" style="left:86.10px;top:341px;font-size:6.4px;color:#303030;font-weight:400;transform:scaleX(0.845);transform-origin:left 0;">80003</div>
<div class="t" style="left:127.60px;top:341px;font-size:6.4px;color:#303030;font-weight:400;transform:scaleX(0.845);transform-origin:left 0;">80003</div>
<div class="t" style="left:165.00px;top:341px;font-size:6.4px;color:#303030;font-weight:400;transform:scaleX(0.845);transform-origin:left 0;">Computer <span style="color:#9a9a9a">III</span> 733 MHz</div>
<div class="t" style="right:614.00px;top:341px;font-size:6.4px;color:#303030;font-weight:400;text-align:right;transform:scaleX(0.845);transform-origin:right 0;">1</div>
<div class="t" style="left:294.50px;top:341px;font-size:6.4px;color:#303030;font-weight:400;transform:scaleX(0.73);transform-origin:left 0;">PCS</div>
<svg class="r" style="left:342.3px;top:337.8px" width="5.5" height="5.5" viewBox="0 0 55 55"><rect x="5" y="5" width="45" height="45" rx="8" fill="#fff" stroke="#666" stroke-width="5"/></svg>
<div class="t" style="left:527.40px;top:341px;font-size:6.4px;color:#303030;font-weight:400;transform:scaleX(0.845);transform-origin:left 0;">Not Enabled</div>
<div class="t" style="right:300.60px;top:341px;font-size:6.4px;color:#303030;font-weight:400;text-align:right;transform:scaleX(0.845);transform-origin:right 0;">0</div>
<div class="t" style="right:256.40px;top:341px;font-size:6.4px;color:#303030;font-weight:400;text-align:right;transform:scaleX(0.845);transform-origin:right 0;">0</div>
<div class="t" style="left:652.00px;top:341px;font-size:6.4px;color:#303030;font-weight:400;transform:scaleX(0.845);transform-origin:left 0;">Yes</div>
<svg class="r" style="left:694.8px;top:337.5px" width="5.5" height="5.5" viewBox="0 0 55 55"><rect x="5" y="5" width="45" height="45" rx="7" fill="#f2f2f2" stroke="#c2c2c2" stroke-width="5"/><path d="M14 28 L23 37 L41 17" stroke="#b8b8b8" stroke-width="6" fill="none"/></svg>
<div class="t" style="right:149.00px;top:341px;font-size:6.4px;color:#00747c;font-weight:400;text-align:right;transform:scaleX(0.845);transform-origin:right 0;">0.00</div>
<div class="t" style="right:104.50px;top:341px;font-size:6.4px;color:#303030;font-weight:400;text-align:right;transform:scaleX(0.845);transform-origin:right 0;">37.30</div>
<div class="t" style="left:804.20px;top:341px;font-size:6.4px;color:#303030;font-weight:400;transform:scaleX(0.845);transform-origin:left 0;">Manually</div>
<div class="t" style="right:30.50px;top:341px;font-size:6.4px;color:#303030;font-weight:400;text-align:right;transform:scaleX(0.845);transform-origin:right 0;">0</div>
<div class="t" style="left:37.10px;top:352px;font-size:6.4px;color:#303030;font-weight:400;transform:scaleX(0.845);transform-origin:left 0;">Item</div>
<div class="t" style="left:86.10px;top:352px;font-size:6.4px;color:#303030;font-weight:400;transform:scaleX(0.845);transform-origin:left 0;">80004</div>
<div class="t" style="left:127.60px;top:352px;font-size:6.4px;color:#303030;font-weight:400;transform:scaleX(0.845);transform-origin:left 0;">80004</div>
<div class="t" style="left:165.00px;top:352px;font-size:6.4px;color:#303030;font-weight:400;transform:scaleX(0.845);transform-origin:left 0;">Computer <span style="color:#9a9a9a">III</span> 800 MHz</div>
<div class="t" style="right:614.00px;top:352px;font-size:6.4px;color:#303030;font-weight:400;text-align:right;transform:scaleX(0.845);transform-origin:right 0;">1</div>
<div class="t" style="left:294.50px;top:352px;font-size:6.4px;color:#303030;font-weight:400;transform:scaleX(0.73);transform-origin:left 0;">PCS</div>
<svg class="r" style="left:342.3px;top:348.8px" width="5.5" height="5.5" viewBox="0 0 55 55"><rect x="5" y="5" width="45" height="45" rx="8" fill="#fff" stroke="#666" stroke-width="5"/></svg>
<div class="t" style="left:527.40px;top:352px;font-size:6.4px;color:#303030;font-weight:400;transform:scaleX(0.845);transform-origin:left 0;">Not Enabled</div>
<div class="t" style="right:300.60px;top:352px;font-size:6.4px;color:#303030;font-weight:400;text-align:right;transform:scaleX(0.845);transform-origin:right 0;">0</div>
<div class="t" style="right:256.40px;top:352px;font-size:6.4px;color:#303030;font-weight:400;text-align:right;transform:scaleX(0.845);transform-origin:right 0;">0</div>
<div class="t" style="left:652.00px;top:352px;font-size:6.4px;color:#303030;font-weight:400;transform:scaleX(0.845);transform-origin:left 0;">Yes</div>
<svg class="r" style="left:694.8px;top:348.5px" width="5.5" height="5.5" viewBox="0 0 55 55"><rect x="5" y="5" width="45" height="45" rx="7" fill="#f2f2f2" stroke="#c2c2c2" stroke-width="5"/><path d="M14 28 L23 37 L41 17" stroke="#b8b8b8" stroke-width="6" fill="none"/></svg>
<div class="t" style="right:149.00px;top:352px;font-size:6.4px;color:#00747c;font-weight:400;text-align:right;transform:scaleX(0.845);transform-origin:right 0;">0.00</div>
<div class="t" style="right:104.50px;top:352px;font-size:6.4px;color:#303030;font-weight:400;text-align:right;transform:scaleX(0.845);transform-origin:right 0;">40.00</div>
<div class="t" style="left:804.20px;top:352px;font-size:6.4px;color:#303030;font-weight:400;transform:scaleX(0.845);transform-origin:left 0;">Manually</div>
<div class="t" style="right:30.50px;top:352px;font-size:6.4px;color:#303030;font-weight:400;text-align:right;transform:scaleX(0.845);transform-origin:right 0;">0</div>
<div class="t" style="left:37.10px;top:363px;font-size:6.4px;color:#303030;font-weight:400;transform:scaleX(0.845);transform-origin:left 0;">Item</div>
<div class="t" style="left:86.10px;top:363px;font-size:6.4px;color:#303030;font-weight:400;transform:scaleX(0.845);transform-origin:left 0;">80005</div>
<div class="t" style="left:127.60px;top:363px;font-size:6.4px;color:#303030;font-weight:400;transform:scaleX(0.845);transform-origin:left 0;">80005</div>
<div class="t" style="left:165.00px;top:363px;font-size:6.4px;color:#303030;font-weight:400;transform:scaleX(0.845);transform-origin:left 0;">Computer <span style="color:#9a9a9a">III</span> 866 MHz</div>
<div class="t" style="right:614.00px;top:363px;font-size:6.4px;color:#303030;font-weight:400;text-align:right;transform:scaleX(0.845);transform-origin:right 0;">1</div>
<div class="t" style="left:294.50px;top:363px;font-size:6.4px;color:#303030;font-weight:400;transform:scaleX(0.73);transform-origin:left 0;">PCS</div>
<svg class="r" style="left:342.3px;top:359.8px" width="5.5" height="5.5" viewBox="0 0 55 55"><rect x="5" y="5" width="45" height="45" rx="8" fill="#fff" stroke="#666" stroke-width="5"/></svg>
<div class="t" style="left:527.40px;top:363px;font-size:6.4px;color:#303030;font-weight:400;transform:scaleX(0.845);transform-origin:left 0;">Not Enabled</div>
<div class="t" style="right:300.60px;top:363px;font-size:6.4px;color:#303030;font-weight:400;text-align:right;transform:scaleX(0.845);transform-origin:right 0;">0</div>
<div class="t" style="right:256.40px;top:363px;font-size:6.4px;color:#303030;font-weight:400;text-align:right;transform:scaleX(0.845);transform-origin:right 0;">0</div>
<div class="t" style="left:652.00px;top:363px;font-size:6.4px;color:#303030;font-weight:400;transform:scaleX(0.845);transform-origin:left 0;">Yes</div>
<svg class="r" style="left:694.8px;top:359.5px" width="5.5" height="5.5" viewBox="0 0 55 55"><rect x="5" y="5" width="45" height="45" rx="7" fill="#f2f2f2" stroke="#c2c2c2" stroke-width="5"/><path d="M14 28 L23 37 L41 17" stroke="#b8b8b8" stroke-width="6" fill="none"/></svg>
<div class="t" style="right:149.00px;top:363px;font-size:6.4px;color:#00747c;font-weight:400;text-align:right;transform:scaleX(0.845);transform-origin:right 0;">0.00</div>
<div class="t" style="right:104.50px;top:363px;font-size:6.4px;color:#303030;font-weight:400;text-align:right;transform:scaleX(0.845);transform-origin:right 0;">48.10</div>
<div class="t" style="left:804.20px;top:363px;font-size:6.4px;color:#303030;font-weight:400;transform:scaleX(0.845);transform-origin:left 0;">When Used</div>
<div class="t" style="right:30.50px;top:363px;font-size:6.4px;color:#303030;font-weight:400;text-align:right;transform:scaleX(0.845);transform-origin:right 0;">0</div>
<div class="r" style="left:843px;top:469px;width:32.5px;height:12.5px;box-sizing:border-box;border:0.8px solid #c6c6c6;border-radius:1px;background:#fff"></div>
<div class="t" style="left:759.30px;width:200px;top:476px;font-size:6.2px;color:#262626;font-weight:400;text-align:center;transform:scaleX(0.9);transform-origin:center 0;">Close</div>
</body></html>
